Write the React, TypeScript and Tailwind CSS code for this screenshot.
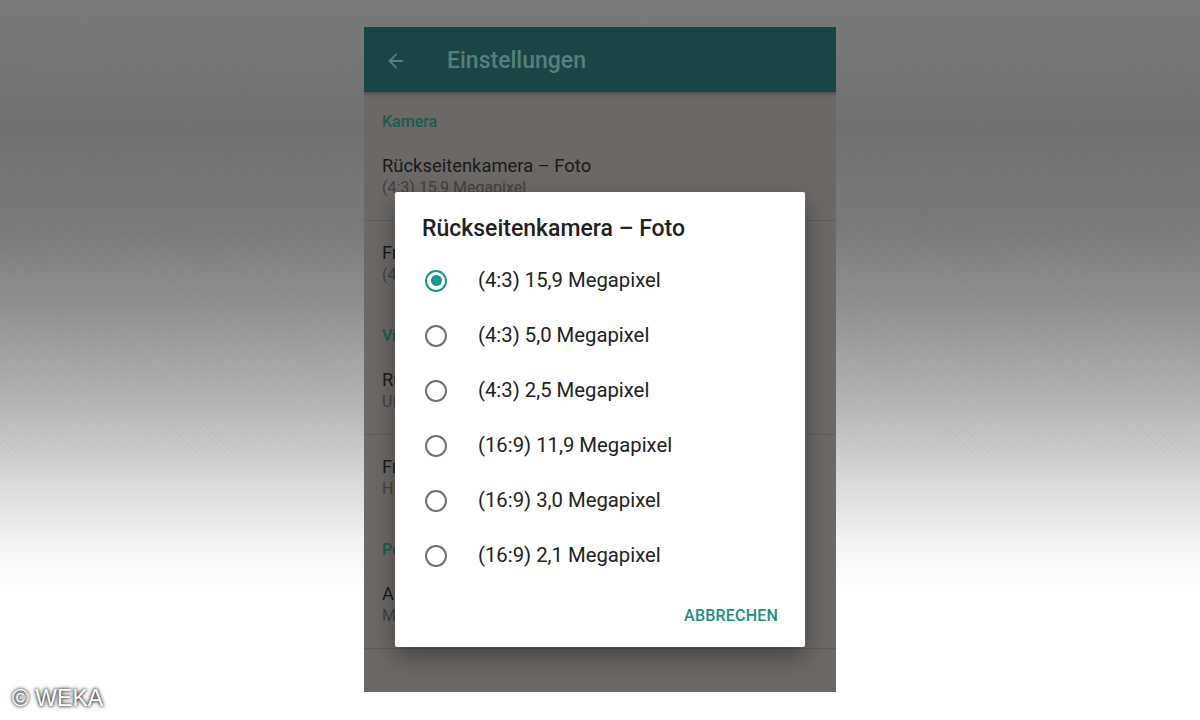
import { ArrowLeft } from 'lucide-react';

const options = [
  '(4:3) 15,9 Megapixel',
  '(4:3) 5,0 Megapixel',
  '(4:3) 2,5 Megapixel',
  '(16:9) 11,9 Megapixel',
  '(16:9) 3,0 Megapixel',
  '(16:9) 2,1 Megapixel',
];

type Item = { title: string; sub: string; divider?: boolean };

const sections: { label: string; items: Item[] }[] = [
  {
    label: 'Kamera',
    items: [
      { title: 'Rückseitenkamera – Foto', sub: '(4:3) 15,9 Megapixel', divider: true },
      { title: 'Frontkamera – Foto', sub: '(4:3) 5,0 Megapixel' },
    ],
  },
  {
    label: 'Video',
    items: [
      { title: 'Rückseitenkamera – Video', sub: 'UHD 4K (30 fps)', divider: true },
      { title: 'Frontkamera – Video', sub: 'HD 1080p' },
    ],
  },
  {
    label: 'Position',
    items: [{ title: 'Aufnahmeort speichern', sub: 'Mit Standortdaten', divider: true }],
  },
];

function Radio({ checked }: { checked: boolean }) {
  return (
    <span
      className={`flex h-[22px] w-[22px] shrink-0 items-center justify-center rounded-full border-2 ${
        checked ? 'border-[#17998a]' : 'border-[#6f6f6f]'
      }`}
    >
      {checked && <span className="h-[11px] w-[11px] rounded-full bg-[#17998a]" />}
    </span>
  );
}

export default function App() {
  return (
    <div
      className="relative flex h-[720px] w-[1200px] justify-center overflow-hidden bg-[image:repeating-linear-gradient(45deg,rgba(0,0,0,0.025)_0_1px,transparent_1px_4px),linear-gradient(to_bottom,#7b7b7b_0%,#717171_18%,#7c7c7c_32%,#8f8f8f_42%,#b2b2b2_55%,#d6d6d6_66%,#f4f4f4_76%,#ffffff_82%,#ffffff_100%)] [background-repeat:no-repeat] [background-size:100%_460px,100%_100%] pt-[27px] font-['Roboto',sans-serif]"
    >
      {/* phone screen, dimmed behind the dialog */}
      <div className="relative h-[665px] w-[472px] overflow-hidden bg-[#6b6866]">
        <header className="flex h-[65px] items-center bg-[#1a4546] pt-[3px] shadow-[0_2px_4px_rgba(0,0,0,0.25)]">
          <ArrowLeft size={22} strokeWidth={2} className="ml-[21px] text-[#55807e]" />
          <h1 className="ml-[40px] text-[23px] font-medium text-[#55807e]">Einstellungen</h1>
        </header>

        <div className="pt-[1px]">
          {sections.map((s) => (
            <div key={s.label}>
              <div className="px-[18px] pb-[3px] pt-[20px] text-[16px] font-medium leading-[18px] text-[#1d5a4e]">
                {s.label}
              </div>
              {s.items.map((it) => (
                <div key={it.title} className={it.divider ? 'border-b border-[#5e5b59]' : ''}>
                  <div className="px-[18px] py-[21px]">
                    <div className="text-[18.4px] leading-[22px] text-[#1c1b1a]">{it.title}</div>
                    <div className="text-[16px] leading-[22px] text-[#44413f]">{it.sub}</div>
                  </div>
                </div>
              ))}
            </div>
          ))}
        </div>

        {/* resolution picker */}
        <div className="absolute left-[31px] top-[165px] flex h-[455px] w-[410px] flex-col rounded-[2px] bg-white shadow-[0_10px_24px_rgba(0,0,0,0.35)]">
          <h2 className="px-[27px] pb-[10px] pt-[23px] text-[23px] font-medium leading-[28px] text-[#212121]">
            Rückseitenkamera – Foto
          </h2>
          <ul>
            {options.map((o, i) => (
              <li key={o} className="flex h-[55px] items-center gap-[31px] px-[30px]">
                <Radio checked={i === 0} />
                <span className="text-[20.3px] text-[#212121]">{o}</span>
              </li>
            ))}
          </ul>
          <div className="flex flex-1 items-center justify-end pr-[27px] pt-[1px]">
            <button className="text-[16px] font-medium tracking-[0.2px] text-[#1c8f80]">ABBRECHEN</button>
          </div>
        </div>
      </div>

      <div className="absolute bottom-[10px] left-[12px] font-['Liberation_Sans',sans-serif] text-[23px] leading-none text-white [text-shadow:0_0_3px_#000,0_0_5px_rgba(0,0,0,0.6)]">
        © WEKA
      </div>
    </div>
  );
}
